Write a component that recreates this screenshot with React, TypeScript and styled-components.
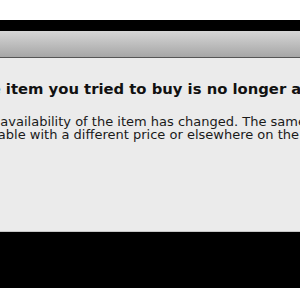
import React from "react";
import styled, { createGlobalStyle } from "styled-components";

const Global = createGlobalStyle`
  html, body { margin: 0; padding: 0; background: #ffffff; }
  body { width: 300px; height: 300px; overflow: hidden; font-family: "DejaVu Sans", "Liberation Sans", sans-serif; }
`;

const Screen = styled.div`
  width: 300px;
  height: 300px;
  display: flex;
  flex-direction: column;
  background: #ffffff;
  overflow: hidden;
`;

const Gap = styled.div<{ $h: number; $bg: string }>`
  height: ${(p) => p.$h}px;
  flex: none;
  background: ${(p) => p.$bg};
`;

const TitleBar = styled.div`
  height: 26px;
  flex: none;
  background: linear-gradient(#d6d6d6, #a6a6a6);
  border-bottom: 1px solid #555555;
`;

const Content = styled.div`
  height: 151px;
  flex: none;
  background: #ebebeb;
  border-bottom: 1px solid #c6c6c6;
  overflow: hidden;
  padding-top: 22px;
`;

const Heading = styled.div`
  margin-left: -30px;
  white-space: nowrap;
  font-weight: bold;
  font-size: 14.8px;
  line-height: 18px;
  color: #111111;
`;

const Body = styled.div`
  margin-top: 17px;
  white-space: nowrap;
  font-size: 13px;
  line-height: 13px;
  color: #1a1a1a;
`;

const Line = styled.div<{ $shift: number }>`
  margin-left: ${(p) => -p.$shift}px;
`;

export default function App() {
  return (
    <>
      <Global />
      <Screen>
        <Gap $h={20} $bg="#ffffff" />
        <Gap $h={11} $bg="#000000" />
        <TitleBar />
        <Content>
          <Heading>The item you tried to buy is no longer available.</Heading>
          <Body>
            <Line $shift={28}>The availability of the item has changed. The same item may be</Line>
            <Line $shift={33}>available with a different price or elsewhere on the site.</Line>
          </Body>
        </Content>
        <Gap $h={56} $bg="#000000" />
      </Screen>
    </>
  );
}
